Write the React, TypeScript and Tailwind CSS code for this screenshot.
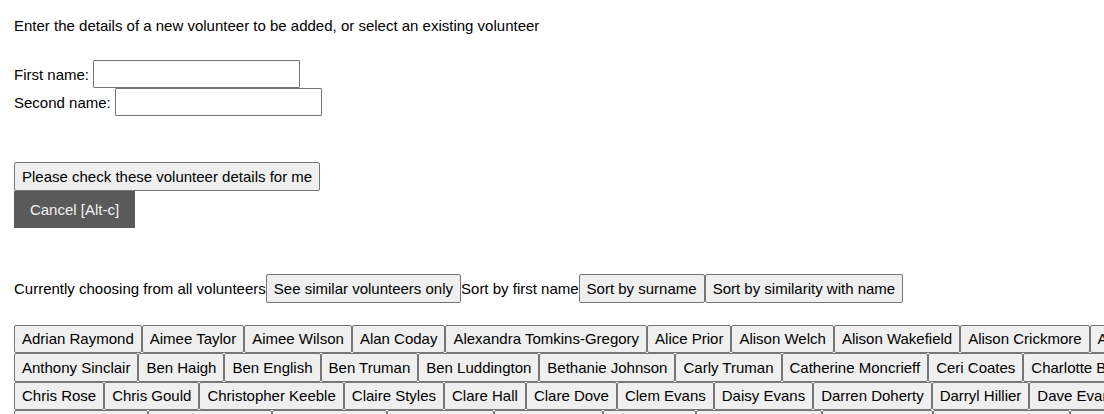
import React from "react";

const rows: string[][] = [
  ["Adrian Raymond", "Aimee Taylor", "Aimee Wilson", "Alan Coday", "Alexandra Tomkins-Gregory", "Alice Prior", "Alison Welch", "Alison Wakefield", "Alison Crickmore", "Amanda Brown", "Amy Jones"],
  ["Anthony Sinclair", "Ben Haigh", "Ben English", "Ben Truman", "Ben Luddington", "Bethanie Johnson", "Carly Truman", "Catherine Moncrieff", "Ceri Coates", "Charlotte Bell", "Chloe Hart"],
  ["Chris Rose", "Chris Gould", "Christopher Keeble", "Claire Styles", "Clare Hall", "Clare Dove", "Clem Evans", "Daisy Evans", "Darren Doherty", "Darryl Hillier", "Dave Evans", "David Lee"],
  ["Deborah Johnson", "David Wakefield", "Donna Truman", "Dean Truman", "Denise Evans", "Dom Evans", "Emily Crickmore", "Emma Coates", "Eleanor Wakefield", "Ella Green"],
];

const btn =
  "shrink-0 whitespace-nowrap bg-[#efefef] border border-[#767676] rounded-[2px] px-[7px] py-[4.7px] leading-[17.25px] text-[15px] text-black";

export default function App() {
  return (
    <div
      className="w-[1104px] h-[414px] overflow-hidden bg-white text-black text-[15px] leading-[17.25px] pl-[14px] pt-[17px]"
      style={{ fontFamily: '"Liberation Sans", Arial, sans-serif' }}
    >
      <p>Enter the details of a new volunteer to be added, or select an existing volunteer</p>

      <div className="mt-[26px] flex flex-col">
        <div className="flex items-center h-[28px]">
          <span>First name:</span>
          <input className="ml-[4px] w-[207px] h-[28px] border border-[#767676] rounded-[1px] bg-white" />
        </div>
        <div className="flex items-center h-[28px]">
          <span>Second name:</span>
          <input className="ml-[4px] w-[207px] h-[28px] border border-[#767676] rounded-[1px] bg-white" />
        </div>
      </div>

      <div className="mt-[46px] flex flex-col items-start">
        <button className={btn}>Please check these volunteer details for me</button>
        <button className="w-[121px] h-[37px] bg-[#5a5a5a] text-[#f2f2f2] text-[15px] leading-[17.25px]">
          Cancel [Alt-c]
        </button>
      </div>

      <div className="mt-[46px] flex items-center whitespace-nowrap">
        <span>Currently choosing from all volunteers</span>
        <button className={btn}>See similar volunteers only</button>
        <span>Sort by first name</span>
        <button className={btn}>Sort by surname</button>
        <button className={btn}>Sort by similarity with name</button>
      </div>

      <div className="mt-[22px] flex flex-col">
        {rows.map((r, i) => (
          <div key={i} className="flex">
            {r.map((n) => (
              <button key={n} className={btn}>
                {n}
              </button>
            ))}
          </div>
        ))}
      </div>
    </div>
  );
}
